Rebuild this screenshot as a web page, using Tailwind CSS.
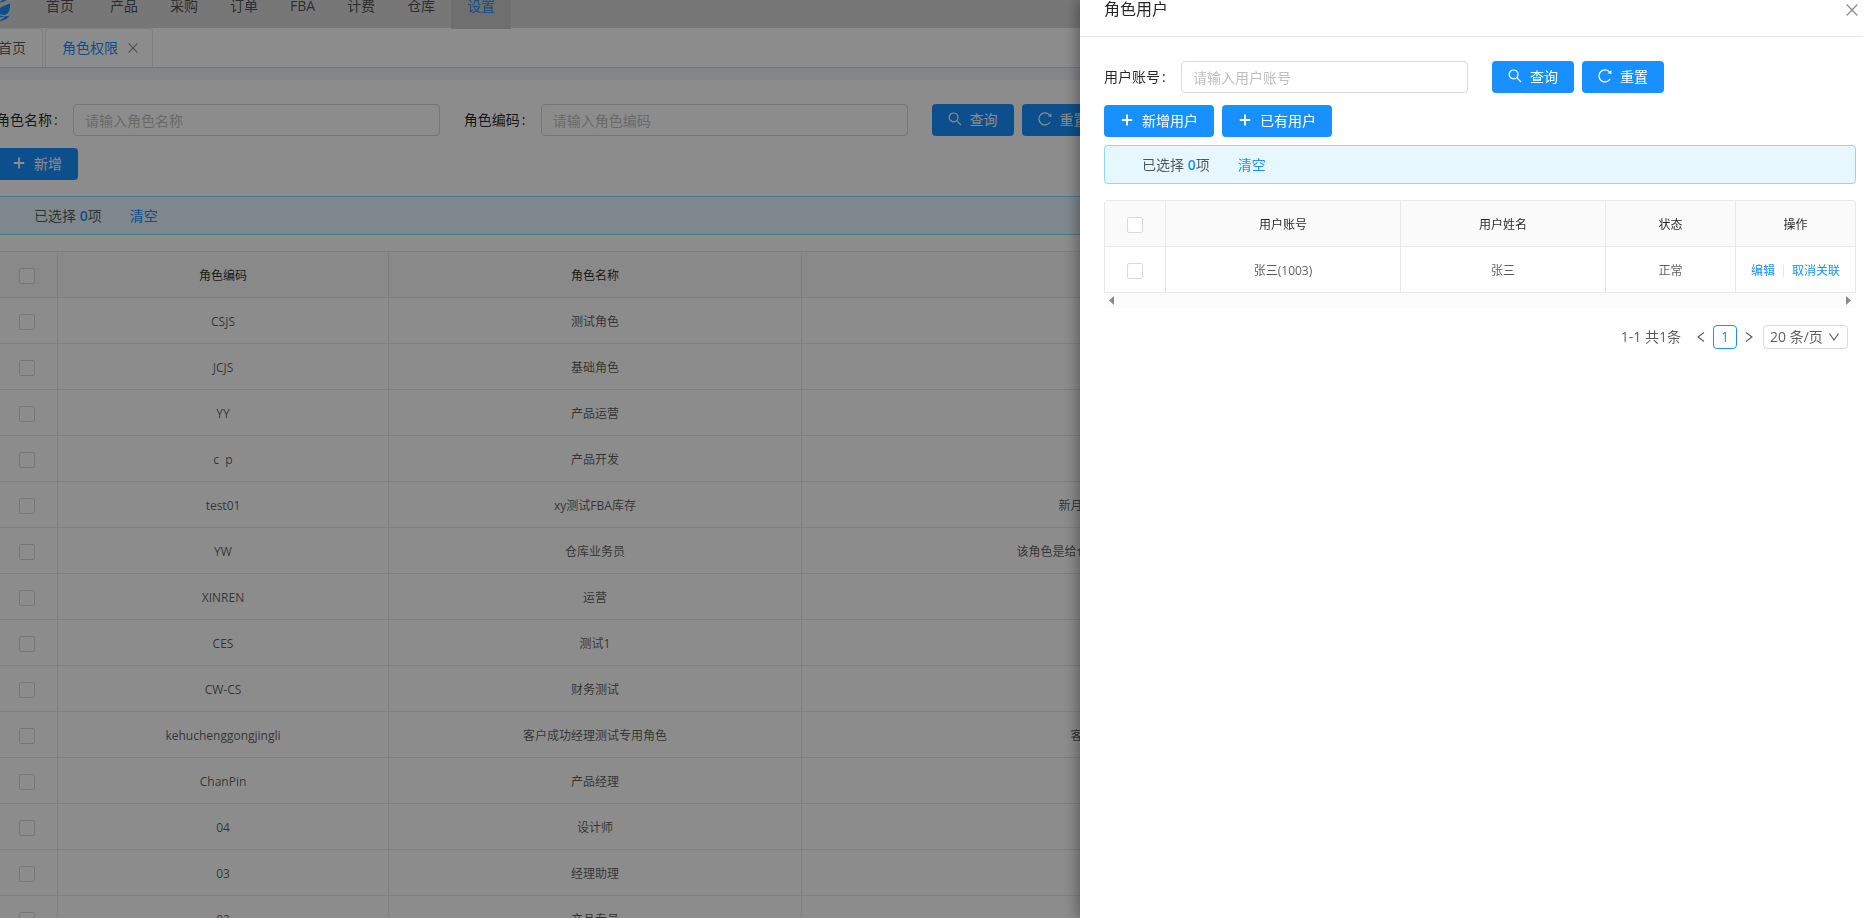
<!DOCTYPE html>
<html lang="zh-CN">
<head>
    <meta charset="UTF-8">
    <meta name="viewport" content="width=device-width, initial-scale=1.0">
    <title>角色权限</title>
    <script src="https://cdn.jsdelivr.net/npm/@tailwindcss/browser@4"></script>
</head>
<body class="h-screen overflow-hidden bg-[#f0f2f5] font-['Open_Sans','Noto_Sans_CJK_SC',sans-serif] text-sm leading-[22px] text-black/65">
    <!-- icons -->
    <svg class="hidden">
        <symbol id="i-search" viewBox="0 0 14 14"><g fill="none" stroke="currentColor" stroke-width="1.2"><circle cx="5.6" cy="5.4" r="4.4"/><path d="M8.7 8.700L13 13"/></g></symbol>
        <symbol id="i-reload" viewBox="0 0 14 14"><path d="M12.1 10A6 6 0 1 1 11.6 3.2" fill="none" stroke="currentColor" stroke-width="1.2"/><path d="M13.4 1.200V5.100L9.800 4.200Z" fill="currentColor"/></symbol>
        <symbol id="i-plus" viewBox="0 0 14 14"><path d="M7 1.500v11M1.800 7h10.400" fill="none" stroke="currentColor" stroke-width="1.8"/></symbol>
        <symbol id="i-close" viewBox="0 0 12 12"><path d="M.7 .5L11.3 11.5M11.3 .5L.7 11.5" fill="none" stroke="currentColor" stroke-width="1.3"/></symbol>
        <symbol id="i-left" viewBox="0 0 8 12"><path d="M7 1.500L1 6l6 4.500" fill="none" stroke="currentColor" stroke-width="1.1"/></symbol>
        <symbol id="i-right" viewBox="0 0 8 12"><path d="M1 1.500L7 6l-6 4.500" fill="none" stroke="currentColor" stroke-width="1.1"/></symbol>
        <symbol id="i-down" viewBox="0 0 12 12"><path d="M1.500 2.500L6 9l4.500-6.500" fill="none" stroke="currentColor" stroke-width="1.1"/></symbol>
    </svg>

    <div class="h-screen overflow-hidden">
        <nav class="flex h-7 bg-[#d9d9d9]">
            <a href="#" class="w-[30px] shrink-0" aria-label="logo">
                <svg class="h-[22px] w-[10px] text-[#1890ff]" viewBox="0 0 10 22" fill="currentColor">
                    <path d="M2.500 0h4C5.500 1.200 3 2 0 2.400V1.800Z"/>
                    <path d="M10 3.300C10.300 8.500 9.500 14 4.500 15 2.800 15.300 1.200 14.800 0 14V8C3 5.800 7 5.500 10 3.300Z"/>
                    <path d="M9.300 16C7.800 18.500 4 20.800 0 21v-1C2.500 19.500 4 18 5 16.300Z"/>
                    <path d="M0 15.600c1.600 1 3.600.800 5 .400-1.400 1.300-3.500 1.600-5 1.100Z"/>
                </svg>
            </a>
            <a href="#" class="mr-1 flex h-[29px] items-end px-4 pb-3">首页</a>
            <a href="#" class="flex h-[29px] items-end px-4 pb-3">产品</a>
            <a href="#" class="flex h-[29px] items-end px-4 pb-3">采购</a>
            <a href="#" class="flex h-[29px] items-end px-4 pb-3">订单</a>
            <a href="#" class="flex h-[29px] items-end px-4 pb-3">FBA</a>
            <a href="#" class="flex h-[29px] items-end px-4 pb-3">计费</a>
            <a href="#" class="flex h-[29px] items-end px-4 pb-3">仓库</a>
            <a href="#" class="relative z-10 flex h-[29px] items-end bg-[#cbcbcb] px-4 pb-3 text-[#1890ff]">设置</a>
        </nav>

        <div class="-ml-[19px] flex h-10 gap-0.5 border-b border-[#d4d4d4] bg-white">
            <a href="#" class="flex items-center rounded-t border border-b-0 border-[#e8e8e8] px-4">首页</a>
            <div class="flex items-center rounded-t border border-b-0 border-[#e8e8e8] pl-4 pr-3.5">
                <a href="#" class="text-[#1890ff]">角色权限</a>
                <button class="ml-2.5 text-black/45" aria-label="关闭标签"><svg class="size-2.5"><use href="#i-close"/></svg></button>
            </div>
        </div>

        <main class="mt-3 bg-white pt-6">
            <form class="-mx-1 mb-3 flex">
                <div class="flex w-1/4 items-center pr-6">
                    <label for="roleName" class="w-[77px] shrink-0 text-black/85">角色名称<span class="ml-0.5">:</span></label>
                    <input id="roleName" type="text" placeholder="请输入角色名称" class="h-8 w-full min-w-0 rounded border border-[#d9d9d9] px-[11px] placeholder:text-[#bfbfbf]">
                </div>
                <div class="flex w-1/4 items-center pr-6">
                    <label for="roleCode" class="w-[77px] shrink-0 text-black/85">角色编码<span class="ml-0.5">:</span></label>
                    <input id="roleCode" type="text" placeholder="请输入角色编码" class="h-8 w-full min-w-0 rounded border border-[#d9d9d9] px-[11px] placeholder:text-[#bfbfbf]">
                </div>
                <button type="button" class="mr-2 flex h-8 items-center gap-2 rounded bg-[#1890ff] px-4 text-white"><svg class="mb-0.5 size-3.5"><use href="#i-search"/></svg>查询</button>
                <button type="button" class="flex h-8 items-center gap-2 rounded bg-[#1890ff] px-4 text-white"><svg class="mb-0.5 size-3.5"><use href="#i-reload"/></svg>重置</button>
            </form>
            <button class="-ml-1 flex h-8 items-center gap-2 rounded bg-[#1890ff] px-4 text-white"><svg class="mb-0.5 size-3.5"><use href="#i-plus"/></svg>新增</button>
            <div class="-mx-1 my-4 flex h-[39px] items-center rounded border border-[#91d5ff] bg-[#e6f7ff] pl-[37px]">
                已选择&nbsp;<b class="font-semibold text-[#1890ff]">0</b>项
                <a href="#" class="ml-7 text-[#1890ff]">清空</a>
            </div>
            <table class="-ml-1 w-[1871px] table-fixed border-separate border-spacing-0 border-l border-t border-[#e8e8e8] text-center text-xs [&_td]:pt-0.5 [&_th]:pt-0.5">
                <colgroup><col class="w-[61px]"><col class="w-[331px]"><col class="w-[413px]"><col class="w-[682px]"><col></colgroup>
                <thead>
                    <tr class="h-[46px] bg-[#fafafa] text-black/85">
                        <th class="border-b border-r border-[#e8e8e8]"><input type="checkbox" aria-label="全选" class="block mx-auto size-4 appearance-none rounded-xs border border-[#d9d9d9] bg-white"></th>
                        <th class="border-b border-r border-[#e8e8e8] font-normal">角色编码</th>
                        <th class="border-b border-r border-[#e8e8e8] font-normal">角色名称</th>
                        <th class="border-b border-r border-[#e8e8e8] font-normal">备注</th>
                        <th class="border-b border-r border-[#e8e8e8] font-normal">操作</th>
                    </tr>
                </thead>
                <tbody id="roles"></tbody>
            </table>
        </main>
    </div>

    <div class="fixed inset-0 z-20 bg-black/45"></div>

    <!-- drawer -->
    <aside class="fixed inset-y-0 right-0 z-30 w-[783px] bg-white shadow-[-4px_0_12px_rgba(0,0,0,0.3)]">
        <header class="flex h-[37px] items-end justify-between border-b border-[#e8e8e8] pb-4 pl-6 pr-[5px]">
            <h2 class="text-base leading-[22px] text-black/85">角色用户</h2>
            <button class="mb-1 text-black/45" aria-label="关闭"><svg class="size-3"><use href="#i-close"/></svg></button>
        </header>
        <div class="pl-6 pr-[7px] pt-6">
            <form class="mb-3 flex items-center">
                <label for="account" class="w-[77px] shrink-0 text-black/85">用户账号<span class="ml-0.5">:</span></label>
                <input id="account" type="text" placeholder="请输入用户账号" class="mr-6 h-8 w-[287px] rounded border border-[#d9d9d9] px-[11px] placeholder:text-[#bfbfbf]">
                <button type="button" class="mr-2 flex h-8 items-center gap-2 rounded bg-[#1890ff] px-4 text-white"><svg class="mb-0.5 size-3.5"><use href="#i-search"/></svg>查询</button>
                <button type="button" class="flex h-8 items-center gap-2 rounded bg-[#1890ff] px-4 text-white"><svg class="mb-0.5 size-3.5"><use href="#i-reload"/></svg>重置</button>
            </form>
            <div class="flex gap-2">
                <button class="flex h-8 items-center gap-2 rounded bg-[#1890ff] px-4 text-white"><svg class="mb-0.5 size-3.5"><use href="#i-plus"/></svg>新增用户</button>
                <button class="flex h-8 items-center gap-2 rounded bg-[#1890ff] px-4 text-white"><svg class="mb-0.5 size-3.5"><use href="#i-plus"/></svg>已有用户</button>
            </div>
            <div class="mb-4 mt-2 flex h-[39px] items-center rounded border border-[#91d5ff] bg-[#e6f7ff] pl-[37px]">
                已选择&nbsp;<b class="font-semibold text-[#1890ff]">0</b>项
                <a href="#" class="ml-7 text-[#1890ff]">清空</a>
            </div>
            <table class="w-full table-fixed border-separate border-spacing-0 rounded-t border-l border-t border-[#e8e8e8] text-center text-xs [&_td]:pt-0.5 [&_th]:pt-0.5">
                <colgroup><col class="w-[61px]"><col class="w-[235px]"><col class="w-[205px]"><col class="w-[130px]"><col></colgroup>
                <thead>
                    <tr class="h-[46px] bg-[#fafafa] text-black/85">
                        <th class="border-b border-r border-[#e8e8e8]"><input type="checkbox" aria-label="全选" class="block mx-auto size-4 appearance-none rounded-xs border border-[#d9d9d9] bg-white"></th>
                        <th class="border-b border-r border-[#e8e8e8] font-normal">用户账号</th>
                        <th class="border-b border-r border-[#e8e8e8] font-normal">用户姓名</th>
                        <th class="border-b border-r border-[#e8e8e8] font-normal">状态</th>
                        <th class="rounded-tr border-b border-r border-[#e8e8e8] font-normal">操作</th>
                    </tr>
                </thead>
                <tbody>
                    <tr class="h-[46px]">
                        <td class="border-b border-r border-[#e8e8e8]"><input type="checkbox" aria-label="选择张三" class="block mx-auto size-4 appearance-none rounded-xs border border-[#d9d9d9] bg-white"></td>
                        <td class="border-b border-r border-[#e8e8e8]">张三(1003)</td>
                        <td class="border-b border-r border-[#e8e8e8]">张三</td>
                        <td class="border-b border-r border-[#e8e8e8]">正常</td>
                        <td class="border-b border-r border-[#e8e8e8]">
                            <div class="flex items-center justify-center gap-2 text-[#1890ff]">
                                <a href="#">编辑</a><span class="h-3 w-px bg-[#e8e8e8]"></span><a href="#">取消关联</a>
                            </div>
                        </td>
                    </tr>
                </tbody>
            </table>
            <!-- horizontal scrollbar track -->
            <div class="flex h-[15px] items-center justify-between bg-[#fcfcfc] px-[5px] text-[#8a8a8a]">
                <svg class="h-[9px] w-[5px]" viewBox="0 0 5 9"><path d="M5 0v9L0 4.500Z" fill="currentColor"/></svg>
                <svg class="h-[9px] w-[5px]" viewBox="0 0 5 9"><path d="M0 0v9L5 4.500Z" fill="currentColor"/></svg>
            </div>
            <div class="mt-[17px] flex h-6 items-center justify-end pr-2">
                <span class="mr-4">1-1 共1条</span>
                <button aria-label="上一页"><svg class="h-3 w-2"><use href="#i-left"/></svg></button>
                <button class="mx-2 size-6 rounded border border-[#1890ff] text-[#1890ff]">1</button>
                <button aria-label="下一页"><svg class="h-3 w-2"><use href="#i-right"/></svg></button>
                <div class="relative ml-2.5">
                    <select aria-label="每页条数" class="block h-6 w-[85px] appearance-none rounded border border-[#d9d9d9] pl-1.5"><option>20 条/页</option></select>
                    <svg class="pointer-events-none absolute right-2 top-1.5 size-3"><use href="#i-down"/></svg>
                </div>
            </div>
        </div>
    </aside>

    <script>
        const roles = [
            ['CSJS', '测试角色', ''],
            ['JCJS', '基础角色', ''],
            ['YY', '产品运营', ''],
            ['c&nbsp; p', '产品开发', ''],
            ['test01', 'xy测试FBA库存', '新月测试库存数据专用角色名称'],
            ['YW', '仓库业务员', '该角色是给仓库业务员使用的测试专用角色说明'],
            ['XINREN', '运营', ''],
            ['CES', '测试1', ''],
            ['CW-CS', '财务测试', ''],
            ['kehuchenggongjingli', '客户成功经理测试专用角色', '客户成功经理测试专用角色'],
            ['ChanPin', '产品经理', ''],
            ['04', '设计师', ''],
            ['03', '经理助理', ''],
            ['02', '产品专员', '']
        ];

        document.getElementById('roles').innerHTML = roles.map(([code, name, remark]) => `
            <tr class="h-[46px]">
                <td class="border-b border-r border-[#e8e8e8]"><input type="checkbox" aria-label="选择${name}" class="block mx-auto size-4 appearance-none rounded-xs border border-[#d9d9d9] bg-white"></td>
                <td class="border-b border-r border-[#e8e8e8]">${code}</td>
                <td class="border-b border-r border-[#e8e8e8]">${name}</td>
                <td class="border-b border-r border-[#e8e8e8]">${remark}</td>
                <td class="border-b border-r border-[#e8e8e8]"></td>
            </tr>`).join('');
    </script>
</body>
</html>
